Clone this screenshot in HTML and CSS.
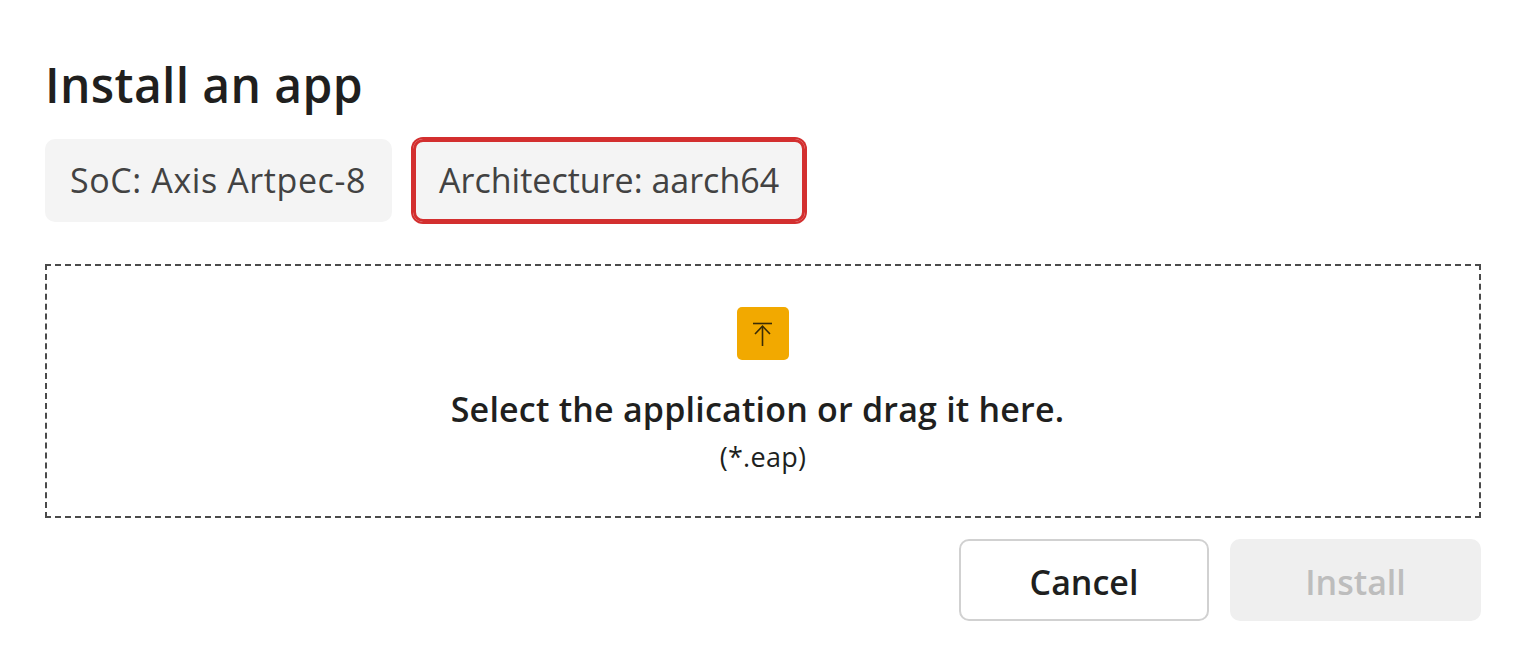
FILE: index.html
```html
<!DOCTYPE html>
<html lang="en">
  <head>
    <meta charset="UTF-8" />
    <title>Install an app</title>
    <link rel="stylesheet" href="styles.css">
  </head>
  <body>
    <main class="dialog">
      <h1>Install an app</h1>
      <div class="chips">
        <span class="chip chip-soc">SoC: Axis Artpec-8</span>
        <span class="chip chip-marked">Architecture: aarch64</span>
      </div>
      <section class="dropzone">
        <span class="upload-icon">
          <svg width="24" height="24" viewBox="0 0 24 24" fill="none" stroke="#3a2c06" stroke-width="1.6">
            <path d="M2 1.5H21" />
            <path d="M11.5 4V24" />
            <path d="M4 12L11.5 4.2L19 12" />
          </svg>
        </span>
        <p class="drop-title">Select the application or drag it here.</p>
        <p class="drop-hint">(*.eap)</p>
      </section>
      <div class="actions">
        <button class="btn btn-cancel" type="button">Cancel</button>
        <button class="btn btn-install" type="button" disabled>Install</button>
      </div>
    </main>
  </body>
</html>
```

FILE: styles.css
```css
* {
  margin: 0;
  padding: 0;
  box-sizing: border-box;
}

body {
  font-family: "Open Sans", "Noto Sans", sans-serif;
  background-color: #fff;
  color: #201f1e;
}

.dialog {
  padding: 53px 44px 0 45px;
}

h1 {
  font-size: 48px;
  line-height: 64px;
  font-weight: 600;
  letter-spacing: 0.35px;
}

.chips {
  display: flex;
  gap: 21px;
  margin-top: 22px;
}

.chip {
  height: 83px;
  display: flex;
  align-items: center;
  padding: 0 26px 2px 25px;
  background-color: #f4f4f4;
  border-radius: 10px;
  font-size: 34px;
  color: #424242;
}

.chip-soc {
  letter-spacing: 0.6px;
}

.chip-marked {
  padding-left: 26px;
  box-shadow: 0 0 0 2px #d32f2f, inset 0 0 0 3px #d32f2f;
}

.dropzone {
  height: 254px;
  margin-top: 42px;
  border: 2px dashed #4a4a4a;
  display: flex;
  flex-direction: column;
  align-items: center;
  padding-top: 41px;
}

.upload-icon {
  width: 52px;
  height: 53px;
  background-color: #f2a900;
  border-radius: 5px;
  display: flex;
  align-items: center;
  justify-content: center;
}

.drop-title {
  margin-top: 24px;
  margin-right: 11px;
  font-size: 34px;
  line-height: 50px;
  font-weight: 600;
  letter-spacing: 0.2px;
}

.drop-hint {
  font-size: 27px;
  line-height: 46px;
  letter-spacing: 0.3px;
}

.actions {
  display: flex;
  justify-content: flex-end;
  gap: 21px;
  margin-top: 21px;
}

.btn {
  width: 250px;
  height: 82px;
  padding-top: 3px;
  border-radius: 10px;
  font-family: inherit;
  font-size: 34px;
  font-weight: 600;
}

.btn-cancel {
  background-color: #fff;
  border: 2px solid #d1d1d1;
  color: #201f1e;
}

.btn-install {
  width: 251px;
  background-color: #efefef;
  border: none;
  color: #bdbdbd;
}
```
